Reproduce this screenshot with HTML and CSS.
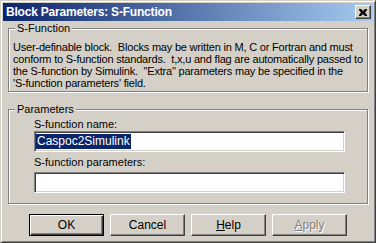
FILE: index.html
```html
<!DOCTYPE html>
<html lang="en">
<head>
    <meta charset="UTF-8">
    <title>Block Parameters: S-Function</title>
    <link rel="stylesheet" href="styles.css">
</head>
<body>

<div class="window">
    <div class="titlebar">
        <span class="title">Block Parameters: S-Function</span>
        <button class="close-button">
            <svg width="8" height="7" viewBox="0 0 8 7">
                <path d="M0 0h2l2 2l2-2h2v1l-2 2.5l2 2.5v1h-2l-2-2l-2 2h-2v-1l2-2.5l-2-2.5z" fill="#000"/>
            </svg>
        </button>
    </div>

    <div class="content">
        <fieldset class="group group-info">
            <legend>S-Function</legend>
            <p class="description">User-definable block.&nbsp; Blocks may be written in M, C or Fortran and must<br>
            conform to S-function standards.&nbsp; t,x,u and flag are automatically passed to<br>
            the S-function by Simulink.&nbsp; "Extra" parameters may be specified in the<br>
            'S-function parameters' field.</p>
        </fieldset>

        <fieldset class="group group-params">
            <legend>Parameters</legend>
            <div class="params-body">
                <label class="field-label">S-function name:</label>
                <div class="text-input"><span class="selected">Caspoc2Simulink</span></div>
                <label class="field-label">S-function parameters:</label>
                <div class="text-input"></div>
            </div>
        </fieldset>

        <div class="button-row">
            <button class="dlg-button default-button">OK</button>
            <button class="dlg-button">Cancel</button>
            <button class="dlg-button"><u>H</u>elp</button>
            <button class="dlg-button disabled-button"><u>A</u>pply</button>
        </div>
    </div>
</div>

</body>
</html>
```

FILE: styles.css
```css
body {
    margin: 0;
    padding: 0;
    font-family: "Liberation Sans", Arial, sans-serif;
    font-size: 11px;
    background-color: #d4d0c8;
}

.window {
    box-sizing: border-box;
    width: 376px;
    height: 243px;
    padding: 2px;
    background-color: #d4d0c8;
    border-top: 1px solid #d4d0c8;
    border-left: 1px solid #d4d0c8;
    border-right: 1px solid #404040;
    border-bottom: 1px solid #404040;
    box-shadow: inset 1px 1px #fff, inset -1px -1px #808080;
    display: flex;
    flex-direction: column;
}

.titlebar {
    height: 18px;
    display: flex;
    align-items: center;
    justify-content: space-between;
    padding: 0 2px 0 3px;
    background: linear-gradient(to right, #0a246a, #a6caf0);
}

.title {
    color: #fff;
    font-weight: bold;
    font-size: 12px;
    letter-spacing: -0.2px;
}

.close-button {
    box-sizing: border-box;
    width: 16px;
    height: 14px;
    padding: 0;
    display: flex;
    align-items: center;
    justify-content: center;
    background-color: #d4d0c8;
    border-top: 1px solid #fff;
    border-left: 1px solid #fff;
    border-right: 1px solid #404040;
    border-bottom: 1px solid #404040;
    box-shadow: inset -1px -1px #808080;
}

.content {
    padding: 1px 4px 0 5px;
}

.group {
    margin: 0;
    padding: 0;
    border: 1px solid #808080;
    box-shadow: inset 1px 1px #fff, 1px 1px #fff;
    width: 360px;
    box-sizing: border-box;
}

.group legend {
    margin-left: 6px;
    padding: 0 2px;
    line-height: 13px;
    background-color: #d4d0c8;
}

.group-info {
    height: 70px;
}

.description {
    margin: 6px 0 0 4px;
    line-height: 12px;
    white-space: nowrap;
    letter-spacing: -0.2px;
}

.group-params {
    margin-top: 11px;
    height: 101px;
}

.params-body {
    padding: 2px 0 0 25px;
}

.field-label {
    display: block;
    line-height: 13px;
}

.field-label + .text-input {
    margin-top: 0;
}

.text-input {
    box-sizing: border-box;
    width: 311px;
    height: 21px;
    margin-bottom: 4px;
    padding: 2px 1px;
    background-color: #fff;
    border-top: 1px solid #808080;
    border-left: 1px solid #808080;
    border-right: 1px solid #fff;
    border-bottom: 1px solid #fff;
    box-shadow: inset 1px 1px #404040, inset -1px -1px #d4d0c8;
}

.text-input + .field-label {
    margin-bottom: 3px;
}

.selected {
    display: inline-block;
    background-color: #0a246a;
    color: #fff;
    font-size: 12px;
    line-height: 15px;
    padding: 0 1px;
}

.button-row {
    display: flex;
    gap: 6px;
    margin-top: 10px;
    padding-left: 21px;
}

.dlg-button {
    box-sizing: border-box;
    width: 75px;
    height: 22px;
    padding: 0;
    font-family: "Liberation Sans", Arial, sans-serif;
    font-size: 12px;
    color: #000;
    background-color: #d4d0c8;
    border-top: 1px solid #fff;
    border-left: 1px solid #fff;
    border-right: 1px solid #404040;
    border-bottom: 1px solid #404040;
    box-shadow: inset -1px -1px #808080;
}

.default-button {
    border: 1px solid #000;
    box-shadow: inset 1px 1px #fff, inset -1px -1px #404040, inset -2px -2px #808080;
}

.disabled-button {
    color: #808080;
    text-shadow: 1px 1px #fff;
}
```
